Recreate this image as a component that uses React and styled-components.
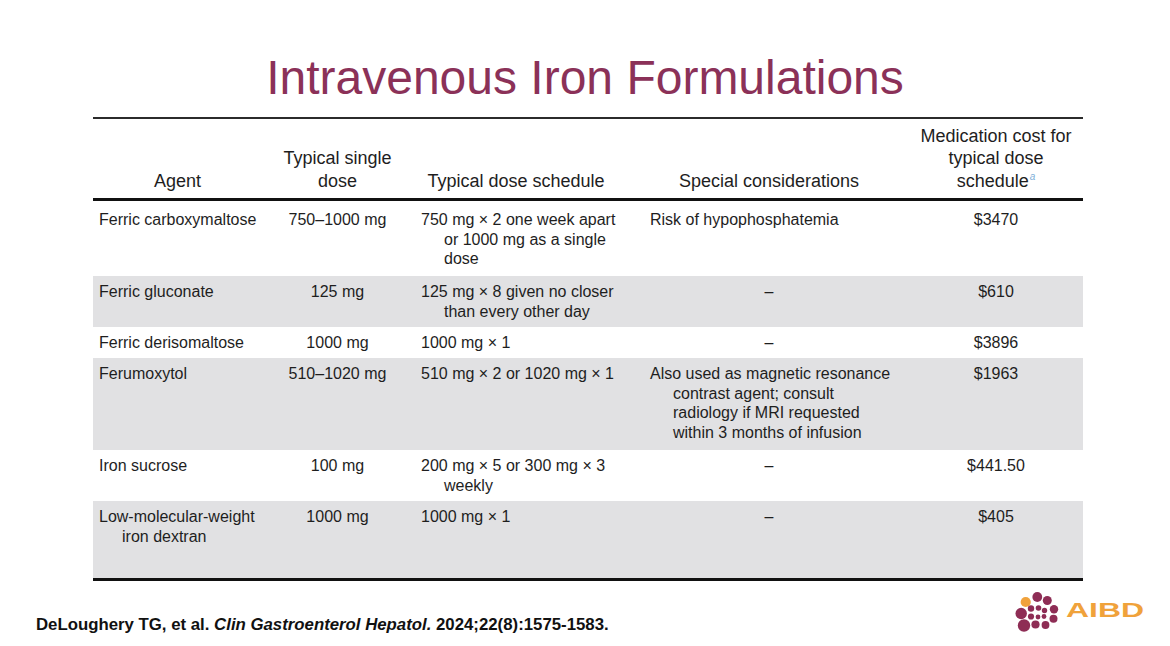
import React from "react";
import styled, { createGlobalStyle } from "styled-components";

const GlobalStyle = createGlobalStyle`
  html, body {
    margin: 0;
    padding: 0;
    background: #fff;
  }
  body {
    font-family: "Liberation Sans", Arial, sans-serif;
  }
`;

const COLS = "169px 151px 227px 258px 185px";

const Slide = styled.div`
  width: 1170px;
  height: 646px;
  display: flex;
  flex-direction: column;
  background: #fff;
  overflow: hidden;
`;

const Title = styled.h1`
  margin: 0;
  padding-top: 50px;
  font-size: 48px;
  line-height: 56px;
  font-weight: 400;
  color: #8b3158;
  text-align: center;
`;

const Table = styled.div`
  margin: 11px 0 0 93px;
  width: 990px;
  border-top: 2px solid #2b2b2b;
  border-bottom: 3px solid #111;
  color: #1e1e1e;
`;

const HeadRow = styled.div`
  display: grid;
  grid-template-columns: ${COLS};
  align-items: end;
  height: 73px;
  padding-bottom: 6px;
  border-bottom: 3px solid #111;
  font-size: 18px;
  line-height: 22.5px;
`;

const HeadCell = styled.div`
  text-align: center;
  white-space: pre-line;
  padding-left: ${({ $pl }) => $pl || 0}px;
  padding-right: ${({ $pr }) => $pr || 0}px;
`;

const Sup = styled.sup`
  font-size: 10px;
  font-style: italic;
  color: #7fb0d8;
  line-height: 0;
  margin-left: 1px;
`;

const BodyRow = styled.div`
  display: grid;
  grid-template-columns: ${COLS};
  align-items: start;
  box-sizing: border-box;
  height: ${({ $h }) => $h}px;
  padding-top: ${({ $first }) => ($first ? 9 : 6)}px;
  background: ${({ $shade }) => ($shade ? "#e1e1e3" : "transparent")};
  font-size: 16px;
  line-height: 19.5px;
`;

const Cell = styled.div`
  white-space: pre-line;
  text-align: ${({ $center }) => ($center ? "center" : "left")};
  padding-left: ${({ $pl = 0, $hang }) => $pl + ($hang ? 23 : 0)}px;
  text-indent: ${({ $hang }) => ($hang ? -23 : 0)}px;
`;

const Footer = styled.div`
  flex: 1;
  display: flex;
  justify-content: space-between;
  align-items: flex-end;
  padding: 0 24px 11px 36px;
`;

const Citation = styled.div`
  font-size: 16.8px;
  line-height: 20px;
  font-weight: 700;
  color: #111;
  em {
    font-style: italic;
  }
`;

const LogoSvg = styled.svg`
  display: block;
  margin-bottom: 1px;
`;

const rows = [
  {
    agent: "Ferric carboxymaltose",
    dose: "750–1000 mg",
    schedule: "750 mg × 2 one week apart\nor 1000 mg as a single\ndose",
    special: "Risk of hypophosphatemia",
    cost: "$3470",
    h: 75,
  },
  {
    agent: "Ferric gluconate",
    dose: "125 mg",
    schedule: "125 mg × 8 given no closer\nthan every other day",
    special: null,
    cost: "$610",
    h: 51,
  },
  {
    agent: "Ferric derisomaltose",
    dose: "1000 mg",
    schedule: "1000 mg × 1",
    special: null,
    cost: "$3896",
    h: 31,
  },
  {
    agent: "Ferumoxytol",
    dose: "510–1020 mg",
    schedule: "510 mg × 2 or 1020 mg × 1",
    special:
      "Also used as magnetic resonance\ncontrast agent; consult\nradiology if MRI requested\nwithin 3 months of infusion",
    cost: "$1963",
    h: 92,
  },
  {
    agent: "Iron sucrose",
    dose: "100 mg",
    schedule: "200 mg × 5 or 300 mg × 3\nweekly",
    special: null,
    cost: "$441.50",
    h: 51,
  },
  {
    agent: "Low-molecular-weight\niron dextran",
    dose: "1000 mg",
    schedule: "1000 mg × 1",
    special: null,
    cost: "$405",
    h: 77,
  },
];

// dot cluster of the AIBD mark, [cx, cy, r]
const dots = [
  [23.3, 9, 4.9],
  [33.3, 12.5, 4.5],
  [40, 21.3, 4.2],
  [39.5, 30.8, 4],
  [31.5, 37, 3.9],
  [21.5, 36.5, 4.1],
  [10, 37.5, 6.2],
  [7.2, 25.5, 5.7],
  [17, 20.5, 3.2],
  [24.5, 20, 2.8],
  [30.5, 22.5, 2.7],
  [17, 28.5, 3.1],
  [24, 29, 2.4],
  [30, 28.5, 2.4],
];

const Logo = () => (
  <LogoSvg width="132" height="46" viewBox="0 0 132 46">
    <circle cx="11.7" cy="14" r="5.1" fill="#f0a23b" />
    <g fill="#8e2d55">
      {dots.map(([cx, cy, r]) => (
        <circle key={`${cx}-${cy}`} cx={cx} cy={cy} r={r} />
      ))}
    </g>
    <text
      x="52"
      y="29"
      fontSize="20"
      fontWeight="700"
      fontFamily="Liberation Sans, Arial, sans-serif"
      textLength="78"
      lengthAdjust="spacingAndGlyphs"
      fill="#f0a23b"
    >
      AIBD
    </text>
  </LogoSvg>
);

const App = () => (
  <>
    <GlobalStyle />
    <Slide>
      <Title>Intravenous Iron Formulations</Title>
      <Table>
        <HeadRow>
          <HeadCell>Agent</HeadCell>
          <HeadCell>{"Typical single\ndose"}</HeadCell>
          <HeadCell $pr={21}>Typical dose schedule</HeadCell>
          <HeadCell>Special considerations</HeadCell>
          <HeadCell $pl={11}>
            {"Medication cost for\ntypical dose\nschedule"}
            <Sup>a</Sup>
          </HeadCell>
        </HeadRow>
        {rows.map((r, i) => (
          <BodyRow key={r.agent} $h={r.h} $shade={i % 2 === 1} $first={i === 0}>
            <Cell $pl={6} $hang>
              {r.agent}
            </Cell>
            <Cell $center>{r.dose}</Cell>
            <Cell $pl={8} $hang>
              {r.schedule}
            </Cell>
            {r.special ? (
              <Cell $pl={10} $hang>
                {r.special}
              </Cell>
            ) : (
              <Cell $center>–</Cell>
            )}
            <Cell $center $pl={11}>
              {r.cost}
            </Cell>
          </BodyRow>
        ))}
      </Table>
      <Footer>
        <Citation>
          DeLoughery TG, et al. <em>Clin Gastroenterol Hepatol.</em> 2024;22(8):1575-1583.
        </Citation>
        <Logo />
      </Footer>
    </Slide>
  </>
);

export default App;
